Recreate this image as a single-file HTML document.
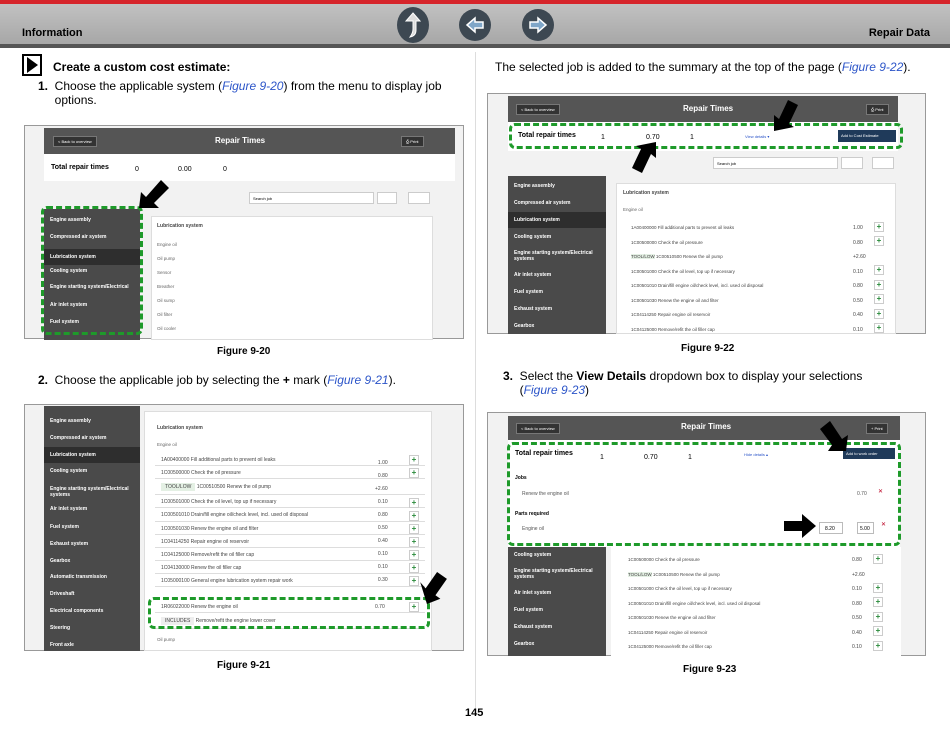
<!DOCTYPE html>
<html><head><meta charset="utf-8"><style>
*{margin:0;padding:0;box-sizing:border-box}
body{width:950px;height:734px;position:relative;background:#fff;font-family:"Liberation Sans",Arial,sans-serif;overflow:hidden;color:#000}
.a{position:absolute}
.hdr{left:0;top:0;width:950px;height:48px;background:linear-gradient(#c4c4c4,#a4a4a4)}
.red{left:0;top:0;width:950px;height:4px;background:#d6252b}
.line{left:0;top:44px;width:950px;height:4px;background:#555}
.nav{width:32px;height:32px;border-radius:50%;background:#3d4852;top:9px}
.t{font-size:12px}
.frame{border:1px solid #999;background:#f2f2f2}
.dk{background:#4a4a4a}
.side div{color:#fff;font-size:5px;font-weight:bold;padding-left:6px;position:absolute;left:0;width:100%}
.row{position:absolute;font-size:5px;color:#444;border-bottom:1px solid #ddd;background:#fff}
.plus{position:absolute;width:10px;height:10px;background:#fff;border:1px solid #ccc;color:#2a8a3a;font-size:8px;line-height:8px;text-align:center;font-weight:bold}
.dash{position:absolute;border:3px dashed #1e9a2a;border-radius:6px}
.cap{font-size:10px;font-weight:bold;position:absolute}
.lnk{color:#2b54c8;font-style:italic}
.btn{position:absolute;background:#333;color:#fff;font-size:4px;border:1px solid #777;padding:2px 4px}
</style></head><body>
<div class="a hdr"></div><div class="a red"></div><div class="a line"></div>
<div class="a" style="left:22px;top:27px;font-size:11px;font-weight:bold">Information</div>
<div class="a" style="right:20px;top:27px;font-size:11px;font-weight:bold">Repair Data</div>
<div class="a nav" style="left:397px;top:7px;width:32px;height:36px"><svg width="32" height="36"><path d="M16 6 L23 14 L19 14 L19 23 Q19 29 13 30 Q16 26 16 22 L16 14 L9 14 Z" fill="#ddd" stroke="#fff" stroke-width="1"/></svg></div>
<div class="a nav" style="left:459px"><svg width="32" height="32"><path d="M8 16 L16 9 L16 13 L24 13 L24 19 L16 19 L16 23 Z" fill="#7fa6c8" stroke="#fff" stroke-width="1.5"/></svg></div>
<div class="a nav" style="left:522px"><svg width="32" height="32"><path d="M24 16 L16 9 L16 13 L8 13 L8 19 L16 19 L16 23 Z" fill="#7fa6c8" stroke="#fff" stroke-width="1.5"/></svg></div>
<div class="a" style="left:475px;top:52px;width:1px;height:660px;background:#ddd"></div>

<div class="a" style="left:22px;top:54px;width:20px;height:22px;border:2px solid #000"><svg width="16" height="18"><path d="M3 1 L14 9 L3 17 Z" fill="#000"/></svg></div>
<div class="a t" style="left:53px;top:60px;font-weight:bold">Create a custom cost estimate:</div>
<div class="a t" style="left:38px;top:79px;width:420px;line-height:14px"><b>1.</b>&nbsp;&nbsp;Choose the applicable system (<span class="lnk">Figure 9-20</span>) from the menu to display job<br>&nbsp;&nbsp;&nbsp;&nbsp;&nbsp;options.</div>
<div class="a t" style="left:495px;top:60px">The selected job is added to the summary at the top of the page (<span class="lnk">Figure 9-22</span>).</div>

<!-- Fig 9-20 -->
<div class="a frame" style="left:24px;top:125px;width:440px;height:214px">
 <div class="a dk" style="left:19px;top:2px;width:411px;height:26px;background:#555"></div>
 <div class="btn" style="left:28px;top:10px">&lt; Back to overview</div>
 <div class="a" style="left:190px;top:10px;color:#fff;font-size:8px;font-weight:bold">Repair Times</div>
 <div class="btn" style="left:376px;top:10px">⎙ Print</div>
 <div class="a" style="left:19px;top:28px;width:411px;height:27px;background:#fff"></div>
 <div class="a" style="left:26px;top:38px;font-size:7px;font-weight:bold">Total repair times</div>
 <div class="a" style="left:110px;top:40px;font-size:7px">0</div>
 <div class="a" style="left:153px;top:40px;font-size:7px">0.00</div>
 <div class="a" style="left:198px;top:40px;font-size:7px">0</div>
 <div class="a" style="left:224px;top:66px;width:125px;height:12px;background:#fff;border:1px solid #ccc;font-size:4px;padding:3px">Search job</div>
 <div class="a" style="left:352px;top:66px;width:20px;height:12px;background:#fff;border:1px solid #ccc"></div>
 <div class="a" style="left:383px;top:66px;width:22px;height:12px;background:#fff;border:1px solid #ccc"></div>
 <div class="a side dk" style="left:19px;top:83px;width:96px;height:131px">
  <div style="top:8px">Engine assembly</div><div style="top:25px">Compressed air system</div>
  <div style="top:40px;height:16px;background:#2e2e2e;padding-top:5px">Lubrication system</div>
  <div style="top:59px">Cooling system</div><div style="top:75px">Engine starting system/Electrical</div>
  <div style="top:93px">Air inlet system</div><div style="top:110px">Fuel system</div></div>
 <div class="a" style="left:126px;top:90px;width:282px;height:124px;background:#fff;border:1px solid #ddd"></div>
 <div class="a" style="left:132px;top:97px;font-size:5px;font-weight:bold;color:#444">Lubrication system</div>
 <div class="a" style="left:132px;top:112px;font-size:4.5px;color:#666;line-height:14px">Engine oil<br>Oil pump<br>Sensor<br>Breather<br>Oil sump<br>Oil filter<br>Oil cooler</div>
 <div class="dash" style="left:16px;top:80px;width:102px;height:129px"></div>
 <svg class="a" style="left:112px;top:50px" width="36" height="34"><path d="M2 32 L4 16 L9 21 L24 4 L32 12 L17 27 L22 32 Z" fill="#000"/></svg>
</div>
<div class="cap" style="left:217px;top:346px">Figure 9-20</div>

<div class="a t" style="left:38px;top:373px"><b>2.</b>&nbsp;&nbsp;Choose the applicable job by selecting the <b>+</b> mark (<span class="lnk">Figure 9-21</span>).</div>

<!-- Fig 9-21 -->
<div class="a frame" style="left:24px;top:404px;width:440px;height:247px">
 <div class="a side dk" style="left:19px;top:1px;width:96px;height:245px">
  <div style="top:12px">Engine assembly</div><div style="top:29px">Compressed air system</div>
  <div style="top:41px;height:16px;background:#2e2e2e;padding-top:5px">Lubrication system</div>
  <div style="top:62px">Cooling system</div><div style="top:80px">Engine starting system/Electrical<br>systems</div>
  <div style="top:100px">Air inlet system</div><div style="top:118px">Fuel system</div>
  <div style="top:135px">Exhaust system</div><div style="top:152px">Gearbox</div>
  <div style="top:168px">Automatic transmission</div><div style="top:185px">Driveshaft</div>
  <div style="top:202px">Electrical components</div><div style="top:219px">Steering</div><div style="top:236px">Front axle</div></div>
 <div class="a" style="left:119px;top:6px;width:288px;height:240px;background:#fff;border:1px solid #ddd"></div>
 <div class="a" style="left:132px;top:20px;font-size:5px;font-weight:bold;color:#444">Lubrication system</div>
 <div class="a" style="left:132px;top:37px;font-size:4.5px;color:#666">Engine oil</div>
 <div class="row" style="left:130px;top:48px;width:270px;height:13px;padding:4px 6px">1A00400000 Fill additional parts to prevent oil leaks</div>
 <div class="row" style="left:130px;top:61px;width:270px;height:13px;padding:4px 6px">1C00500000 Check the oil pressure</div>
 <div class="row" style="left:130px;top:74px;width:270px;height:16px;padding:5px 6px"><span style="background:#e4f0e4;padding:1px 4px">TOOL/LOW</span> 1C00510500 Renew the oil pump</div>
 <div class="row" style="left:130px;top:90px;width:270px;height:13px;padding:4px 6px">1C00501000 Check the oil level, top up if necessary</div>
 <div class="row" style="left:130px;top:103px;width:270px;height:14px;padding:4px 6px">1C00501010 Drain/fill engine oil/check level, incl. used oil disposal</div>
 <div class="row" style="left:130px;top:117px;width:270px;height:13px;padding:4px 6px">1C00501030 Renew the engine oil and filter</div>
 <div class="row" style="left:130px;top:130px;width:270px;height:13px;padding:4px 6px">1C04114250 Repair engine oil reservoir</div>
 <div class="row" style="left:130px;top:143px;width:270px;height:13px;padding:4px 6px">1C04125000 Remove/refit the oil filler cap</div>
 <div class="row" style="left:130px;top:156px;width:270px;height:13px;padding:4px 6px">1C04130000 Renew the oil filler cap</div>
 <div class="row" style="left:130px;top:169px;width:270px;height:13px;padding:4px 6px">1C05000100 General engine lubrication system repair work</div>
 <div class="row" style="left:130px;top:195px;width:270px;height:13px;padding:4px 6px">1R06022000 Renew the engine oil</div>
 <div class="row" style="left:130px;top:208px;width:270px;height:16px;padding:5px 6px"><span style="background:#eee;padding:1px 4px">INCLUDES</span> Remove/refit the engine lower cover</div>
 <div class="a" style="left:350px;top:52px;font-size:5px;line-height:13px;color:#444;text-align:right">1.00<br>0.80<br>+2.60<br>0.10<br>0.80<br>0.50<br>0.40<br>0.10<br>0.10<br>0.30</div>
 <div class="a" style="left:350px;top:199px;font-size:5px;color:#444">0.70</div>
 <div class="plus" style="left:384px;top:50px">+</div><div class="plus" style="left:384px;top:63px">+</div><div class="plus" style="left:384px;top:93px">+</div><div class="plus" style="left:384px;top:106px">+</div><div class="plus" style="left:384px;top:119px">+</div><div class="plus" style="left:384px;top:132px">+</div><div class="plus" style="left:384px;top:145px">+</div><div class="plus" style="left:384px;top:158px">+</div><div class="plus" style="left:384px;top:171px">+</div><div class="plus" style="left:384px;top:197px">+</div>
 <div class="a" style="left:132px;top:232px;font-size:4.5px;color:#666">Oil pump</div>
 <div class="dash" style="left:123px;top:192px;width:282px;height:32px"></div>
 <svg class="a" style="left:390px;top:165px" width="32" height="36"><path d="M22 34 L30 22 L24 22 L24 2 L12 2 L12 22 L4 20 Z" fill="#000" transform="rotate(35 17 18)"/></svg>
</div>
<div class="cap" style="left:217px;top:660px">Figure 9-21</div>

<!-- Fig 9-22 -->
<div class="a frame" style="left:487px;top:93px;width:439px;height:241px">
 <div class="a" style="left:20px;top:2px;width:390px;height:26px;background:#555"></div>
 <div class="btn" style="left:28px;top:10px">&lt; Back to overview</div>
 <div class="a" style="left:195px;top:10px;color:#fff;font-size:8px;font-weight:bold">Repair Times</div>
 <div class="btn" style="left:378px;top:10px">⎙ Print</div>
 <div class="a" style="left:20px;top:28px;width:390px;height:29px;background:#fff"></div>
 <div class="a" style="left:30px;top:38px;font-size:7px;font-weight:bold">Total repair times</div>
 <div class="a" style="left:113px;top:40px;font-size:7px">1</div>
 <div class="a" style="left:158px;top:40px;font-size:7px">0.70</div>
 <div class="a" style="left:202px;top:40px;font-size:7px">1</div>
 <div class="a" style="left:257px;top:40px;font-size:4px;color:#2b54c8">View details ▾</div>
 <div class="a" style="left:350px;top:36px;width:58px;height:12px;background:#1f3a5a;color:#fff;font-size:4px;padding:3px">Add to Cost Estimate</div>
 <div class="a" style="left:225px;top:63px;width:125px;height:12px;background:#fff;border:1px solid #ccc;font-size:4px;padding:3px">Search job</div>
 <div class="a" style="left:353px;top:63px;width:22px;height:12px;background:#fff;border:1px solid #ccc"></div>
 <div class="a" style="left:384px;top:63px;width:22px;height:12px;background:#fff;border:1px solid #ccc"></div>
 <div class="a side dk" style="left:20px;top:82px;width:98px;height:158px">
  <div style="top:7px">Engine assembly</div><div style="top:24px">Compressed air system</div>
  <div style="top:36px;height:16px;background:#2e2e2e;padding-top:5px">Lubrication system</div>
  <div style="top:58px">Cooling system</div><div style="top:74px">Engine starting system/Electrical<br>systems</div>
  <div style="top:96px">Air inlet system</div><div style="top:113px">Fuel system</div>
  <div style="top:130px">Exhaust system</div><div style="top:147px">Gearbox</div></div>
 <div class="a" style="left:128px;top:89px;width:280px;height:151px;background:#fff;border:1px solid #ddd"></div>
 <div class="a" style="left:135px;top:96px;font-size:5px;font-weight:bold;color:#444">Lubrication system</div>
 <div class="a" style="left:135px;top:113px;font-size:4.5px;color:#666">Engine oil</div>
 <div class="a" style="left:143px;top:127px;font-size:4.5px;color:#444;line-height:14.5px">1A00400000 Fill additional parts to prevent oil leaks<br>1C00500000 Check the oil pressure<br><span style="background:#e4f0e4">TOOL/LOW</span> 1C00510500 Renew the oil pump<br>1C00501000 Check the oil level, top up if necessary<br>1C00501010 Drain/fill engine oil/check level, incl. used oil disposal<br>1C00501030 Renew the engine oil and filter<br>1C04114250 Repair engine oil reservoir<br>1C04125000 Remove/refit the oil filler cap</div>
 <div class="a" style="left:365px;top:127px;font-size:5px;line-height:14.5px;color:#444">1.00<br>0.80<br>+2.60<br>0.10<br>0.80<br>0.50<br>0.40<br>0.10</div>
 <div class="plus" style="left:386px;top:128px">+</div><div class="plus" style="left:386px;top:142px">+</div><div class="plus" style="left:386px;top:171px">+</div><div class="plus" style="left:386px;top:186px">+</div><div class="plus" style="left:386px;top:200px">+</div><div class="plus" style="left:386px;top:215px">+</div><div class="plus" style="left:386px;top:229px">+</div>
 <div class="dash" style="left:21px;top:29px;width:394px;height:26px"></div>
 <svg class="a" style="left:282px;top:3px" width="30" height="36"><path d="M4 34 L4 18 L9 22 L18 3 L28 8 L19 27 L24 30 Z" fill="#000"/></svg>
 <svg class="a" style="left:142px;top:46px" width="30" height="36"><path d="M26 2 L26 18 L21 14 L12 33 L2 28 L11 9 L6 6 Z" fill="#000"/></svg>
</div>
<div class="cap" style="left:681px;top:343px">Figure 9-22</div>

<div class="a t" style="left:503px;top:369px;line-height:14px"><b>3.</b>&nbsp;&nbsp;Select the <b>View Details</b> dropdown box to display your selections<br>&nbsp;&nbsp;&nbsp;&nbsp;&nbsp;(<span class="lnk">Figure 9-23</span>)</div>

<!-- Fig 9-23 -->
<div class="a frame" style="left:487px;top:412px;width:439px;height:244px">
 <div class="a" style="left:20px;top:3px;width:392px;height:24px;background:#555"></div>
 <div class="btn" style="left:28px;top:10px">&lt; Back to overview</div>
 <div class="a" style="left:193px;top:9px;color:#fff;font-size:8px;font-weight:bold">Repair Times</div>
 <div class="btn" style="left:378px;top:10px">+ Print</div>
 <div class="a" style="left:20px;top:27px;width:392px;height:107px;background:#fff"></div>
 <div class="a" style="left:27px;top:37px;font-size:7px;font-weight:bold">Total repair times</div>
 <div class="a" style="left:112px;top:41px;font-size:7px">1</div>
 <div class="a" style="left:156px;top:41px;font-size:7px">0.70</div>
 <div class="a" style="left:200px;top:41px;font-size:7px">1</div>
 <div class="a" style="left:256px;top:39px;font-size:4px;color:#2b54c8">Hide details ▴</div>
 <div class="a" style="left:355px;top:35px;width:52px;height:11px;background:#1f3a5a;color:#fff;font-size:4px;padding:3px">Add to work order</div>
 <div class="a" style="left:27px;top:62px;font-size:5px;font-weight:bold">Jobs</div>
 <div class="a" style="left:34px;top:78px;font-size:5px;color:#555">Renew the engine oil</div>
 <div class="a" style="left:369px;top:78px;font-size:5px;color:#555">0.70</div>
 <div class="a" style="left:390px;top:75px;color:#b02;font-size:6px">✕</div>
 <div class="a" style="left:27px;top:98px;font-size:5px;font-weight:bold">Parts required</div>
 <div class="a" style="left:34px;top:113px;font-size:5px;color:#555">Engine oil</div>
 <div class="a" style="left:331px;top:109px;width:24px;height:12px;border:1px solid #bbb;font-size:5px;padding:3px 5px">8.20</div>
 <div class="a" style="left:369px;top:109px;width:17px;height:12px;border:1px solid #bbb;font-size:5px;padding:3px 2px">5.00</div>
 <div class="a" style="left:393px;top:108px;color:#b02;font-size:6px">✕</div>
 <div class="a side dk" style="left:20px;top:134px;width:98px;height:109px">
  <div style="top:5px">Cooling system</div><div style="top:21px">Engine starting system/Electrical<br>systems</div>
  <div style="top:43px">Air inlet system</div><div style="top:60px">Fuel system</div>
  <div style="top:77px">Exhaust system</div><div style="top:94px">Gearbox</div></div>
 <div class="a" style="left:123px;top:134px;width:290px;height:109px;background:#fff"></div>
 <div class="a" style="left:140px;top:140px;font-size:4.5px;color:#444;line-height:14.5px">1C00500000 Check the oil pressure<br><span style="background:#e4f0e4">TOOL/LOW</span> 1C00510500 Renew the oil pump<br>1C00501000 Check the oil level, top up if necessary<br>1C00501010 Drain/fill engine oil/check level, incl. used oil disposal<br>1C00501030 Renew the engine oil and filter<br>1C04114250 Repair engine oil reservoir<br>1C04125000 Remove/refit the oil filler cap</div>
 <div class="a" style="left:364px;top:140px;font-size:5px;line-height:14.5px;color:#444">0.80<br>+2.60<br>0.10<br>0.80<br>0.50<br>0.40<br>0.10</div>
 <div class="plus" style="left:385px;top:141px">+</div><div class="plus" style="left:385px;top:170px">+</div><div class="plus" style="left:385px;top:184px">+</div><div class="plus" style="left:385px;top:199px">+</div><div class="plus" style="left:385px;top:213px">+</div><div class="plus" style="left:385px;top:228px">+</div>
 <div class="dash" style="left:19px;top:29px;width:394px;height:104px"></div>
 <svg class="a" style="left:330px;top:4px" width="34" height="36"><path d="M28 34 L30 18 L24 22 L12 4 L2 12 L14 28 L10 34 Z" fill="#000"/></svg>
 <svg class="a" style="left:294px;top:99px" width="36" height="28"><path d="M2 9 L20 9 L20 2 L34 14 L20 26 L20 19 L2 19 Z" fill="#000"/></svg>
</div>
<div class="cap" style="left:683px;top:664px">Figure 9-23</div>

<div class="a" style="left:465px;top:707px;font-size:11px;font-weight:bold">145</div>
</body></html>
